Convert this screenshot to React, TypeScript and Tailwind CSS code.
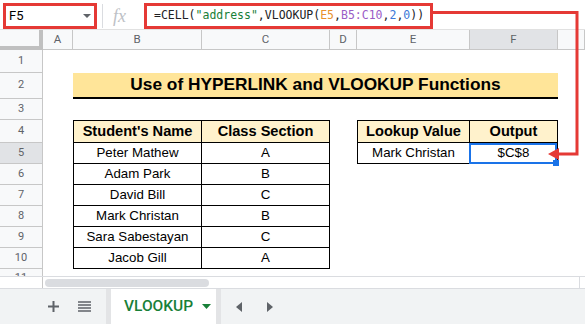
import React from "react";

const columns = ["A", "B", "C", "D", "E", "F", "G"];

const students = [
  ["Peter Mathew", "A"],
  ["Adam Park", "B"],
  ["David Bill", "C"],
  ["Mark Christan", "B"],
  ["Sara Sabestayan", "C"],
  ["Jacob Gill", "A"],
];

const RowNum = ({ n, active = false }: { n: number; active?: boolean }) => (
  <div
    className={`flex items-center justify-center border-r border-b border-[#c7c7c7] text-[11px] text-[#5f6368] font-['Roboto',sans-serif] ${
      active ? "bg-[#e1e3e6]" : "bg-[#f8f9fa]"
    }`}
  >
    {n}
  </div>
);

const App = () => {
  return (
    <div className="relative w-[585px] h-[324px] overflow-hidden bg-white font-['Liberation_Sans',Arial,sans-serif] text-black">
      {/* formula bar */}
      <div className="flex h-[30px] items-start pl-[3px] pt-[3px] border-b border-[#e1e1e1] font-['Roboto',sans-serif]">
        <div className="flex h-[26px] w-[94px] items-center justify-between border-[3px] border-[#e53935] pl-[3px] pr-[3px] text-[13px]">
          <span>F5</span>
          <svg width="8" height="4" viewBox="0 0 8 4">
            <path d="M0 0h8L4 4z" fill="#5f6368" />
          </svg>
        </div>
        <div className="ml-[5px] mt-[1px] h-[24px] w-px bg-[#dadce0]" />
        <span className="ml-[10px] w-[20px] text-[18px] leading-[26px] italic text-[#bdc1c6] font-['Liberation_Serif',serif]">
          fx
        </span>
        <div className="ml-[11px] flex h-[26px] w-[289px] items-center border-[3px] border-[#e53935] pl-[7px] text-[11.5px] text-[#202124] font-['DejaVu_Sans_Mono',monospace] whitespace-nowrap">
          =CELL(<span className="text-[#188038]">"address"</span>,VLOOKUP(
          <span className="text-[#e8912d]">E5</span>,
          <span className="text-[#9a5cc6]">B5:C10</span>,
          <span className="text-[#3c78d8]">2</span>,
          <span className="text-[#3c78d8]">0</span>))
        </div>
      </div>

      {/* sheet grid */}
      <div className="grid grid-cols-[43px_30px_129px_128px_27px_113px_88px_27px] grid-rows-[20px_23px_26px_21px_23px_21px_21px_21px_21px_21px_21px_7px] h-[246px]">
        <div className="bg-[#f8f9fa] border-r-4 border-b-4 border-[#c0c0c0]" />
        {columns.map((c) => (
          <div
            key={c}
            className={`flex items-center justify-center border-r border-b border-[#c7c7c7] text-[11.5px] text-[#5f6368] font-['Roboto',sans-serif] ${
              c === "F" ? "bg-[#e1e3e6]" : "bg-[#f8f9fa]"
            }`}
          >
            {c === "G" ? "" : c}
          </div>
        ))}

        <RowNum n={1} />
        <div className="col-span-7" />

        <RowNum n={2} />
        <div />
        <div className="col-span-5 flex items-center justify-center bg-[#ffe599] border-b-2 border-black text-[17.3px] font-bold">
          Use of HYPERLINK and VLOOKUP Functions
        </div>
        <div />

        <RowNum n={3} />
        <div className="col-span-7" />

        <RowNum n={4} />
        <div />
        <div className="flex items-center justify-center bg-[#fff2cc] border border-black text-[14.6px] font-bold">
          Student's Name
        </div>
        <div className="flex items-center justify-center bg-[#fff2cc] border-t border-r border-b border-black text-[14.6px] font-bold">
          Class Section
        </div>
        <div />
        <div className="flex items-center justify-center bg-[#fff2cc] border border-black text-[14.6px] font-bold">
          Lookup Value
        </div>
        <div className="flex items-center justify-center bg-[#fff2cc] border-t border-r border-b border-black text-[14.6px] font-bold">
          Output
        </div>
        <div />

        {students.map(([name, section], i) => (
          <React.Fragment key={name}>
            <RowNum n={i + 5} active={i === 0} />
            <div />
            <div className="flex items-center justify-center border-l border-r border-b border-black text-[13.3px]">
              {name}
            </div>
            <div className="flex items-center justify-center border-r border-b border-black text-[13.3px]">
              {section}
            </div>
            {i === 0 ? (
              <>
                <div />
                <div className="flex items-center justify-center border-l border-r border-b border-black text-[13.3px]">
                  Mark Christan
                </div>
                <div className="relative flex items-center justify-center border-r border-b border-black text-[13.3px]">
                  $C$8
                  <div className="absolute -left-px top-0 right-0 -bottom-px border-2 border-[#1a73e8]" />
                  <div className="absolute -right-[2px] -bottom-[3px] h-[6px] w-[6px] bg-[#1a73e8]" />
                </div>
                <div />
              </>
            ) : (
              <div className="col-span-4" />
            )}
          </React.Fragment>
        ))}

        <div className="overflow-hidden border-r border-[#c7c7c7] bg-[#f8f9fa] pt-[3px] text-center text-[11px] leading-[12px] text-[#5f6368] font-['Roboto',sans-serif]">
          11
        </div>
        <div className="col-span-7" />
      </div>

      {/* horizontal scrollbar */}
      <div className="flex h-[12px] border-t border-[#dadce0]">
        <div className="w-[43px] border-r border-[#c7c7c7]" />
        <div className="ml-[2px] mt-[1.5px] h-[8px] w-[164px] rounded-full bg-[#dadce0]" />
        <div className="ml-auto mr-[2px] w-[4px] border-l border-[#dadce0]" />
      </div>

      {/* sheet tabs */}
      <div className="flex h-[36px] items-stretch border-t border-[#dadce0] bg-[#f1f3f4] font-['Roboto',sans-serif]">
        <div className="ml-[48px] flex items-center">
          <svg width="11" height="11" viewBox="0 0 11 11">
            <path d="M5.5 0v11M0 5.5h11" stroke="#5f6368" strokeWidth="2" />
          </svg>
        </div>
        <div className="ml-[19px] flex items-center">
          <svg width="13" height="11" viewBox="0 0 13 11">
            <path d="M0 1h13M0 4h13M0 7h13M0 10h13" stroke="#5f6368" strokeWidth="1.6" />
          </svg>
        </div>
        <div className="ml-[15px] flex w-[115px] items-center border-x-[5px] border-[#e3e4e6] bg-white pl-[13px]">
          <span className="text-[15.5px] font-medium text-[#188038]">VLOOKUP</span>
          <svg className="ml-[9px]" width="9" height="5" viewBox="0 0 9 5">
            <path d="M0 0h9L4.5 5z" fill="#188038" />
          </svg>
        </div>
        <div className="ml-[15px] flex items-center">
          <svg width="6" height="10" viewBox="0 0 6 10">
            <path d="M6 0v10L0 5z" fill="#5f6368" />
          </svg>
        </div>
        <div className="ml-[25px] flex items-center">
          <svg width="6" height="10" viewBox="0 0 6 10">
            <path d="M0 0v10L6 5z" fill="#5f6368" />
          </svg>
        </div>
      </div>

      {/* red callout arrow */}
      <svg className="pointer-events-none absolute left-0 top-0" width="585" height="324">
        <path d="M432 12.5H577V154H556" fill="none" stroke="#e53935" strokeWidth="3" />
        <path d="M548 154L559 148V160Z" fill="#e53935" />
      </svg>
    </div>
  );
};

export default App;
